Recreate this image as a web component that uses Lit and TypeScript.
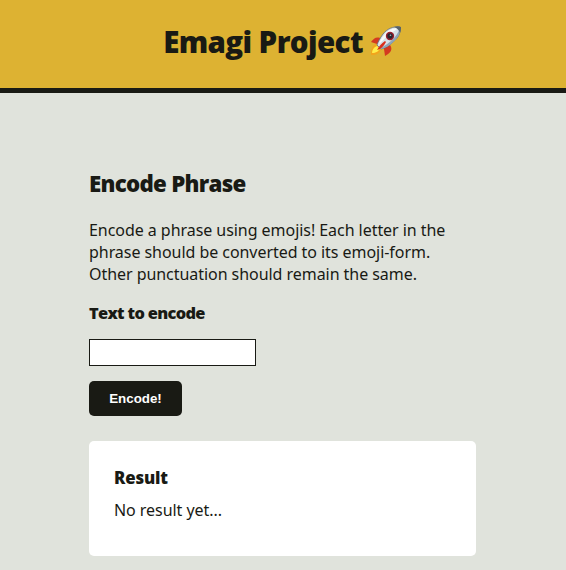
import { LitElement, html, css } from "lit";
import { customElement, state } from "lit/decorators.js";

@customElement("rocket-icon")
class RocketIcon extends LitElement {
  static styles = css`
    :host { display: block; width: 34px; height: 34px; margin-top: 1px; }
    svg { display: block; }
  `;
  render() {
    return html`<svg width="34" height="34" viewBox="0 0 34 34" aria-hidden="true">
      <path d="M13 14C8 11 5 13 2 17l6 2 5 1z" fill="#d43a20"/>
      <path d="M21 20c3 4 1 8-5 11l-1-7-1-4z" fill="#d43a20"/>
      <path d="M7 19c-4 2-5 5-5 11 6 0 9-2 10-6z" fill="#f2a51c"/>
      <path d="M8 21c-3 1-5 4-5 7 4 0 7-2 8-5z" fill="#ffed4a"/>
      <path d="M31 2c-7-1-13 2-17 7-3 4-5 8-6 11l4 4c4-1 8-3 12-7 5-4 8-9 7-15z" fill="#d9e2e8" stroke="#65717c" stroke-width=".8"/>
      <path d="M30 3c-6 0-11 2-14 6-3 3-5 7-6 10 5-4 7-8 12-11 3-2 5-3 8-5z" fill="#f9fbfb"/>
      <path d="M31 3c0 7-3 11-8 15-3 3-7 5-11 6l-1-1c5-2 9-5 13-9 3-3 5-6 7-11z" fill="#8fa6b8"/>
      <path d="M25 2c3-1 5-1 7 0 0 2 0 4-1 6-1-3-3-5-6-6z" fill="#59636a"/>
      <circle cx="21" cy="11" r="4.2" fill="#981f2d"/>
      <circle cx="21" cy="11" r="2.7" fill="#252631"/>
      <circle cx="21.5" cy="10.3" r=".8" fill="#a9b3c5"/>
      <path d="M16 16c-3 2-6 5-8 9 4-1 7-4 9-8z" fill="#d92e1c"/>
    </svg>`;
  }
}

@customElement("app-root")
class AppRoot extends LitElement {
  @state() private result = "No result yet...";

  static styles = css`
    :host {
      display: block;
      height: 570px;
      overflow: hidden;
      background: #e0e3dc;
      color: #191a14;
      font: 16px/22px "Noto Sans", sans-serif;
    }
    h1, h2, h3, p { margin: 0; white-space: nowrap; }
    p { letter-spacing: -.05px; }
    h1, h2, h3 { font-family: "Open Sans", sans-serif; font-weight: 800; }
    header {
      box-sizing: border-box;
      height: 93px;
      border-bottom: 5px solid #191a14;
      background: #ddb232;
      display: flex;
      justify-content: center;
      align-items: flex-start;
      gap: 6px;
      padding-top: 24px;
    }
    h1 { font-size: 29.5px; line-height: 36px; letter-spacing: -.62px; }
    main { padding: 78px 90px 0 89px; }
    h2 { font-size: 22.3px; line-height: 26px; letter-spacing: -.73px; }
    .intro { margin-top: 22px; }
    .label { margin-top: 17px; }
    h3 { font-size: 16.8px; line-height: 22px; letter-spacing: -.15px; }
    h3.label { font-size: 16.4px; letter-spacing: -.68px; }
    input {
      display: block;
      box-sizing: border-box;
      width: 167px;
      height: 27px;
      margin: 15px 0 0;
      padding: 2px 6px;
      border: 1px solid #191a14;
      border-radius: 0;
      background: #fff;
    }
    button {
      display: block;
      width: 93px;
      height: 35px;
      margin-top: 15px;
      padding: 0;
      border: 0;
      border-radius: 5px;
      background: #191a14;
      color: #fff;
      font: bold 13.33px "Liberation Sans", sans-serif;
    }
    .result {
      box-sizing: border-box;
      height: 115px;
      margin-top: 25px;
      padding: 26px 25px;
      border-radius: 5px;
      background: #fff;
    }
    .result p { margin-top: 10px; }
  `;

  render() {
    return html`
      <header><h1>Emagi Project</h1><rocket-icon></rocket-icon></header>
      <main>
        <h2>Encode Phrase</h2>
        <p class="intro">Encode a phrase using emojis! Each letter in the<br>phrase should be converted to its emoji-form.<br>Other punctuation should remain the same.</p>
        <h3 class="label">Text to encode</h3>
        <input type="text" aria-label="Text to encode">
        <button type="button">Encode!</button>
        <section class="result"><h3>Result</h3><p>${this.result}</p></section>
      </main>`;
  }
}
